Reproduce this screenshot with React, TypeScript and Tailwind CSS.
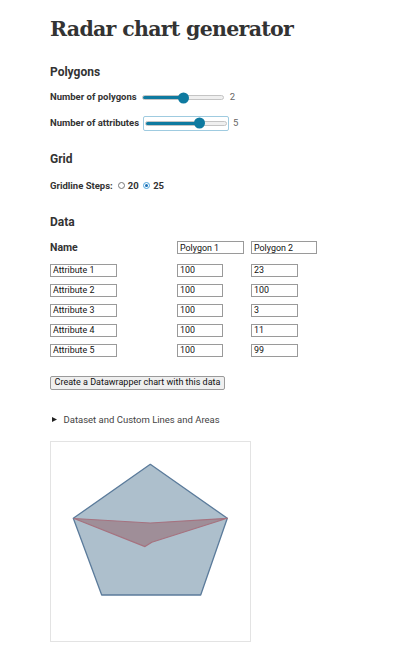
import React from "react";

function Slider({ frac, focused }: { frac: number; focused?: boolean }) {
  const thumb = 11;
  const w = 84;
  const left = frac * (w - thumb);
  return (
    <div
      className={
        "relative w-[86px] h-[15px] flex items-center px-[1px] rounded-[2px] border " +
        (focused ? "border-[#9fcbe0]" : "border-transparent")
      }
    >
      <div className="relative w-full h-[5px] rounded-full bg-[#efefef] border border-[#c4c4c4] overflow-hidden">
        <div
          className="absolute left-0 top-[-1px] bottom-[-1px] bg-[#0e7aa0]"
          style={{ width: left + thumb / 2 }}
        />
      </div>
      <div
        className="absolute top-1/2 -translate-y-1/2 w-[11px] h-[11px] rounded-full bg-[#0e7aa0]"
        style={{ left: left + 1 }}
      />
    </div>
  );
}

function Radio({ checked }: { checked?: boolean }) {
  return checked ? (
    <span className="inline-flex items-center justify-center w-[7.5px] h-[7.5px] rounded-full border-[1.5px] border-[#4aa3dc] bg-white">
      <span className="w-[3px] h-[3px] rounded-full bg-[#1b6fb5]" />
    </span>
  ) : (
    <span className="inline-block w-[7.5px] h-[7.5px] rounded-full border border-[#777] bg-white" />
  );
}

function Field({ value, w }: { value: string; w: string }) {
  return (
    <input
      readOnly
      defaultValue={value}
      className={
        w +
        " block h-[13px] border border-[#9a9a9a] px-[2px] text-[8.9px] leading-none text-[#111] font-['Roboto',sans-serif] bg-white outline-none"
      }
    />
  );
}

export default function App() {
  const rows = [
    ["Attribute 1", "100", "23"],
    ["Attribute 2", "100", "100"],
    ["Attribute 3", "100", "3"],
    ["Attribute 4", "100", "11"],
    ["Attribute 5", "100", "99"],
  ];

  const outer = "100.3,23.3 177.3,77.3 150.7,154 51.7,154 23.3,77.3";
  const inner = "100.3,82 177.3,77.3 101.8,101.2 95,105.6 24.1,77.5";

  return (
    <div className="w-[400px] min-h-[660px] bg-white pl-[50px] pt-[17px] text-[#333] font-['Roboto',sans-serif]">
      <h1 className="text-[20.5px] leading-[24px] font-bold tracking-[-0.7px] font-['DejaVu_Serif',serif] text-[#333]">
        Radar chart generator
      </h1>

      <h2 className="mt-[22.5px] text-[12px] leading-[16px] font-bold">Polygons</h2>

      <div className="mt-[10px] h-[16px] flex items-center">
        <span className="text-[9.5px] font-bold">Number of polygons</span>
        <div className="ml-[3px] flex">
          <Slider frac={0.5} />
        </div>
        <span className="ml-[4px] text-[9.5px] text-[#666]">2</span>
      </div>

      <div className="mt-[9.6px] h-[16px] flex items-center">
        <span className="text-[9.5px] font-bold">Number of attributes</span>
        <div className="ml-[4px] flex">
          <Slider frac={0.667} focused />
        </div>
        <span className="ml-[4px] text-[9.5px] text-[#666]">5</span>
      </div>

      <h2 className="mt-[20px] text-[12px] leading-[16px] font-bold">Grid</h2>

      <div className="mt-[10.6px] h-[16px] flex items-center text-[9.5px] font-bold">
        <span>Gridline Steps:</span>
        <span className="ml-[5px] flex">
          <Radio />
        </span>
        <span className="ml-[2.5px]">20</span>
        <span className="ml-[4px] flex">
          <Radio checked />
        </span>
        <span className="ml-[3px]">25</span>
      </div>

      <h2 className="mt-[20.7px] text-[12px] leading-[16px] font-bold">Data</h2>

      <div className="mt-[9.5px] h-[16px] flex items-center">
        <span className="w-[127px] text-[10.5px] font-bold">Name</span>
        <Field value="Polygon 1" w="w-[67px]" />
        <span className="w-[7px]" />
        <Field value="Polygon 2" w="w-[66px]" />
      </div>

      <div className="mt-[4.5px] flex flex-col">
        {rows.map((r) => (
          <div key={r[0]} className="h-[20px] flex items-center">
            <div className="w-[127px] flex">
              <Field value={r[0]} w="w-[67px]" />
            </div>
            <div className="w-[74px] flex">
              <Field value={r[1]} w="w-[46px]" />
            </div>
            <div className="flex">
              <Field value={r[2]} w="w-[47px]" />
            </div>
          </div>
        ))}
      </div>

      <button className="mt-[15.4px] h-[14px] w-[175px] flex items-center justify-center border border-[#9a9a9a] bg-[#efefef] rounded-[2px] text-[9px] text-[#111] leading-none">
        Create a Datawrapper chart with this data
      </button>

      <div className="mt-[24px] h-[12px] flex items-center text-[9.5px] text-[#444]">
        <svg width="5" height="5" viewBox="0 0 5 5" className="ml-[2px]">
          <polygon points="0,0 5,2.5 0,5" fill="#222" />
        </svg>
        <span className="ml-[6.5px]">Dataset and Custom Lines and Areas</span>
      </div>

      <div className="mt-[15.5px] w-[201px] h-[201px] border border-[#e3e3e3] bg-white">
        <svg width="199" height="199" viewBox="1 1 199 199">
          <polygon points={outer} fill="#adbfcc" stroke="#5b7b9b" strokeWidth="1.3" strokeLinejoin="round" />
          <polygon points={inner} fill="#9f8e98" stroke="#a6727f" strokeWidth="1.2" strokeLinejoin="round" />
        </svg>
      </div>
    </div>
  );
}
